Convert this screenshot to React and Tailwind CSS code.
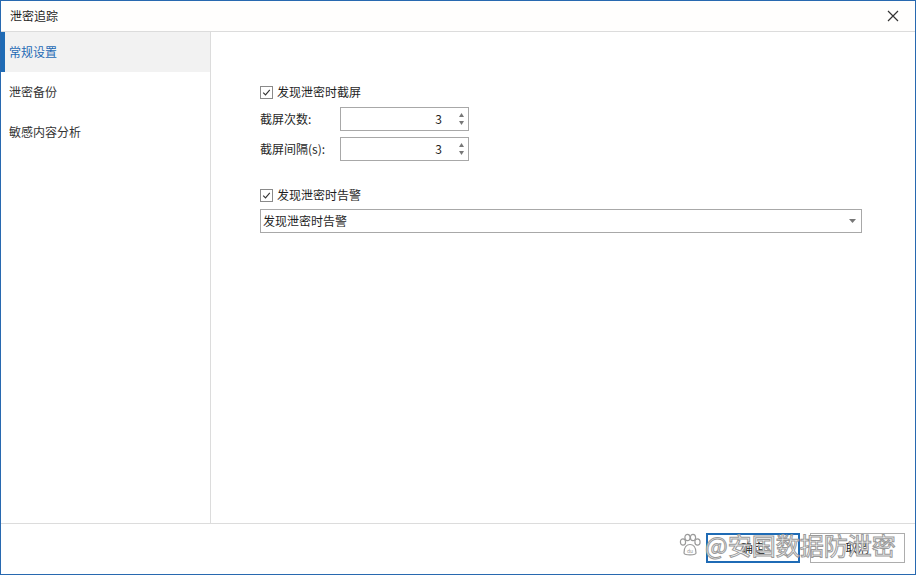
import React from 'react';

const font = { fontFamily: '"Microsoft YaHei", "Noto Sans CJK SC", "Liberation Sans", sans-serif' };

const CheckBox = ({ label }) => (
    <label className="flex items-center h-[16px] text-[12px] text-[#1f1f1f]">
        <span className="w-[13px] h-[13px] border border-[#8a8a8a] bg-white flex items-center justify-center mr-[4px]">
            <svg width="9" height="9" viewBox="0 0 9 9">
                <path d="M1.2 4.6 L3.5 6.9 L7.8 1.8" fill="none" stroke="#333" strokeWidth="1.1" />
            </svg>
        </span>
        {label}
    </label>
);

const Spinner = ({ label, value }) => (
    <div className="flex items-center h-[24px]">
        <span className="w-[80px] text-[12px] text-[#1f1f1f]">{label}</span>
        <div className="w-[129px] h-[24px] border border-[#a8a8a8] bg-white flex items-center justify-end">
            <span className="text-[12px] text-[#1f1f1f] mr-[14px]">{value}</span>
            <div className="flex flex-col items-center justify-center w-[10px] mr-[2px] gap-[4px]">
                <svg width="5" height="4" viewBox="0 0 5 4"><path d="M0 4 L2.5 0 L5 4 Z" fill="#777" /></svg>
                <svg width="5" height="4" viewBox="0 0 5 4"><path d="M0 0 L2.5 4 L5 0 Z" fill="#777" /></svg>
            </div>
        </div>
    </div>
);

const Paw = () => (
    <svg width="24" height="24" viewBox="0 0 24 24">
        <g fill="white" stroke="#9a9a9a" strokeWidth="1.2">
            <ellipse cx="5" cy="9" rx="2.6" ry="3.2" />
            <ellipse cx="9.5" cy="4.5" rx="2.6" ry="3.2" />
            <ellipse cx="15" cy="4.5" rx="2.6" ry="3.2" />
            <ellipse cx="19.5" cy="9" rx="2.6" ry="3.2" />
            <path d="M6 20 C6 14 9 11.5 12 11.5 C15 11.5 18 14 18 20 C18 22.5 6 22.5 6 20 Z" />
        </g>
        <text x="12" y="20" textAnchor="middle" fontSize="5" fill="#9a9a9a" style={font}>du</text>
    </svg>
);

const App = () => {
    const menu = ['常规设置', '泄密备份', '敏感内容分析'];

    return (
        <div className="w-[916px] h-[575px] bg-white border border-[#2869b0] flex flex-col relative" style={font}>
            {/* title bar */}
            <div className="h-[31px] flex items-center justify-between border-b border-[#dcdcdc] bg-[#fffefd] shrink-0">
                <span className="pl-[9px] text-[12px] text-[#1f1f1f]">泄密追踪</span>
                <svg width="12" height="12" viewBox="0 0 12 12" className="mr-[16px]">
                    <path d="M1 1 L11 11 M11 1 L1 11" stroke="#333" strokeWidth="1.2" />
                </svg>
            </div>

            <div className="flex flex-1 min-h-0">
                {/* sidebar */}
                <div className="w-[210px] border-r border-[#dcdcdc] shrink-0">
                    {menu.map((m, i) => (
                        <div
                            key={m}
                            className={`h-[40px] flex items-center text-[12px] ${i === 0 ? 'bg-[#f2f2f2] text-[#1f6bb5] border-l-[4px] border-[#1f6bb5] pl-[4px]' : 'text-[#333] pl-[8px]'}`}
                        >
                            {m}
                        </div>
                    ))}
                </div>

                {/* content */}
                <div className="flex-1 pl-[49px] pt-[52px] pr-[52px]">
                    <CheckBox label="发现泄密时截屏" />
                    <div className="flex flex-col gap-[6px] mt-[7px]">
                        <Spinner label="截屏次数:" value="3" />
                        <Spinner label="截屏间隔(s):" value="3" />
                    </div>
                    <div className="mt-[26px]">
                        <CheckBox label="发现泄密时告警" />
                    </div>
                    <div className="mt-[6px] h-[24px] w-[602px] border border-[#a8a8a8] flex items-center justify-between">
                        <span className="pl-[2px] text-[12px] text-[#1f1f1f]">发现泄密时告警</span>
                        <svg width="7" height="4" viewBox="0 0 7 4" className="mr-[5px]"><path d="M0 0 L3.5 4 L7 0 Z" fill="#777" /></svg>
                    </div>
                </div>
            </div>

            {/* footer */}
            <div className="h-[51px] border-t border-[#dcdcdc] flex justify-end items-start pt-[9px] pr-[10px] gap-[10px] shrink-0">
                <button className="w-[94px] h-[30px] border-2 border-[#1f6bb5] bg-white text-[12px] text-[#1f1f1f]">确定</button>
                <button className="w-[95px] h-[30px] border border-[#adadad] bg-white text-[12px] text-[#1f1f1f]">取消</button>
            </div>

            {/* watermark */}
            <div className="absolute left-[677px] top-[530px] flex items-center gap-[3px] pointer-events-none">
                <Paw />
                <span
                    className="text-[24px] leading-[28px] text-white"
                    style={{ WebkitTextStroke: '1px #9a9a9a' }}
                >
                    @安国数据防泄密
                </span>
            </div>
        </div>
    );
};

export default App;
